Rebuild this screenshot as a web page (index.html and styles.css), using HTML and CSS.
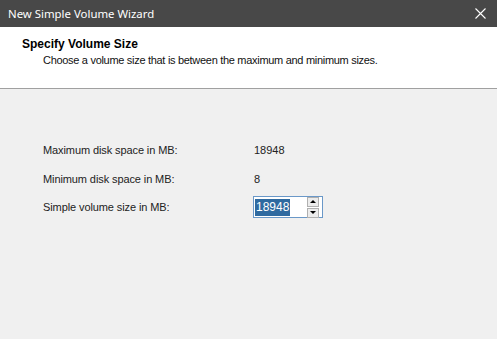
FILE: index.html
```html
<!DOCTYPE html>
<html lang="en">
<head>
	<meta charset="UTF-8">
	<title>New Simple Volume Wizard</title>
	<link rel="stylesheet" href="styles.css">
</head>
<body>
	<div class="wizard">
		<div class="titlebar">
			<span class="title">New Simple Volume Wizard</span>
			<span class="close">
				<svg width="11" height="11" viewBox="0 0 11 11"><path d="M0.5 0.5 L10.5 10.5 M10.5 0.5 L0.5 10.5" stroke="#fff" stroke-width="1.1" fill="none"/></svg>
			</span>
		</div>

		<div class="header">
			<h1>Specify Volume Size</h1>
			<p>Choose a volume size that is between the maximum and minimum sizes.</p>
		</div>

		<div class="content">
			<div class="row">
				<span class="label">Maximum disk space in MB:</span>
				<span class="value">18948</span>
			</div>
			<div class="row">
				<span class="label">Minimum disk space in MB:</span>
				<span class="value">8</span>
			</div>
			<div class="row">
				<span class="label">Simple volume size in MB:</span>
				<div class="spin">
					<span class="spinText"><span class="sel">18948</span></span>
					<span class="spinBtns">
						<span class="btn"><i class="up"></i></span>
						<span class="btn"><i class="down"></i></span>
					</span>
				</div>
			</div>
		</div>
	</div>
</body>
</html>
```

FILE: styles.css
```css
body{
	margin: 0;
	background: #f0f0f0;
	font-family: "Liberation Sans", Arial, sans-serif;
	font-size: 11px;
	color: #000;
}
.wizard{
	width: 497px;
	height: 339px;
	overflow: hidden;
}
.titlebar{
	height: 27px;
	background: #484848;
	display: flex;
	align-items: center;
	justify-content: space-between;
	padding: 0 11px 0 8px;
}
.title{
	color: #fff;
	font-family: "Noto Sans", sans-serif;
	font-size: 11.4px;
}
.close{
	display: flex;
}
.header{
	background: #fff;
	border-bottom: 1px solid #a0a0a0;
	padding: 11px 0 0 22px;
	box-sizing: border-box;
	height: 62px;
}
.header h1{
	margin: 0;
	font-size: 12px;
	font-weight: bold;
	line-height: 13px;
}
.header p{
	margin: 3px 0 0 21px;
	line-height: 13px;
	letter-spacing: -0.3px;
	color: #111;
}
.content{
	padding: 47px 0 0 43px;
	display: flex;
	flex-direction: column;
}
.row{
	display: flex;
	align-items: center;
	height: 28.5px;
}
.label{
	width: 210px;
	color: #222;
	letter-spacing: -0.1px;
}
.value{
	color: #222;
	padding-left: 1px;
}
.spin{
	display: flex;
	align-items: center;
	width: 70px;
	height: 22px;
	border: 1px solid #6a98c8;
	background: #fff;
	box-sizing: border-box;
	padding: 1px 2px 1px 1px;
}
.spinText{
	flex: 1;
	display: flex;
	align-items: center;
	height: 100%;
}
.sel{
	background: #2f6aa0;
	color: #fff;
	padding: 1px 1px;
	font-size: 12px;
	line-height: 15px;
}
.spinBtns{
	display: flex;
	flex-direction: column;
	width: 12px;
	gap: 1px;
	margin-right: 1px;
}
.btn{
	height: 8px;
	border: 1px solid #b0b0b0;
	background: #ececec;
	display: flex;
	align-items: center;
	justify-content: center;
}
.up{
	border-left: 3px solid transparent;
	border-right: 3px solid transparent;
	border-bottom: 3px solid #000;
}
.down{
	border-left: 3px solid transparent;
	border-right: 3px solid transparent;
	border-top: 3px solid #000;
}
```
